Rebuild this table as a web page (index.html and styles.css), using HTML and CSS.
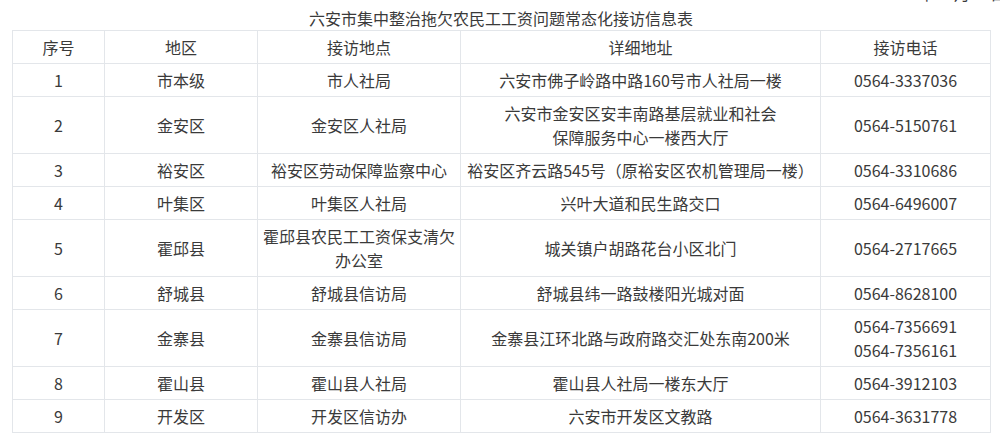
FILE: index.html
```html
<!DOCTYPE html>
<html lang="zh-CN">
<head>
<meta charset="utf-8">
<link rel="stylesheet" href="styles.css">
</head>
<body>
<div class="page">
  <div class="date">年　月　日</div>
  <div class="title">六安市集中整治拖欠农民工工资问题常态化接访信息表</div>
  <table class="info">
    <colgroup>
      <col class="c1"><col class="c2"><col class="c3"><col class="c4"><col class="c5">
    </colgroup>
    <tr><td>序号</td><td>地区</td><td>接访地点</td><td>详细地址</td><td>接访电话</td></tr>
    <tr><td>1</td><td>市本级</td><td>市人社局</td><td>六安市佛子岭路中路160号市人社局一楼</td><td>0564-3337036</td></tr>
    <tr><td>2</td><td>金安区</td><td>金安区人社局</td><td>六安市金安区安丰南路基层就业和社会<br>保障服务中心一楼西大厅</td><td>0564-5150761</td></tr>
    <tr><td>3</td><td>裕安区</td><td>裕安区劳动保障监察中心</td><td>裕安区齐云路545号（原裕安区农机管理局一楼）</td><td>0564-3310686</td></tr>
    <tr><td>4</td><td>叶集区</td><td>叶集区人社局</td><td>兴叶大道和民生路交口</td><td>0564-6496007</td></tr>
    <tr><td>5</td><td>霍邱县</td><td>霍邱县农民工工资保支清欠<br>办公室</td><td>城关镇户胡路花台小区北门</td><td>0564-2717665</td></tr>
    <tr><td>6</td><td>舒城县</td><td>舒城县信访局</td><td>舒城县纬一路鼓楼阳光城对面</td><td>0564-8628100</td></tr>
    <tr><td>7</td><td>金寨县</td><td>金寨县信访局</td><td>金寨县江环北路与政府路交汇处东南200米</td><td>0564-7356691<br>0564-7356161</td></tr>
    <tr><td>8</td><td>霍山县</td><td>霍山县人社局</td><td>霍山县人社局一楼东大厅</td><td>0564-3912103</td></tr>
    <tr><td>9</td><td>开发区</td><td>开发区信访办</td><td>六安市开发区文教路</td><td>0564-3631778</td></tr>
  </table>
</div>
</body>
</html>
```
FILE: styles.css
```css
html, body {
  margin: 0;
  padding: 0;
  background: #ffffff;
}
body {
  font-family: "Microsoft YaHei", "Noto Sans CJK SC", "Noto Sans", sans-serif;
  color: #3a3a3a;
  font-size: 16px;
  overflow: hidden;
}
.page {
  position: relative;
  width: 1000px;
  height: 444px;
  padding-left: 12px;
  box-sizing: border-box;
}
.date {
  position: absolute;
  top: -17px;
  right: -8px;
  font-size: 16px;
  line-height: 20px;
  color: #3a3a3a;
  letter-spacing: 2px;
}
.title {
  width: 978px;
  height: 30px;
  line-height: 36px;
  text-align: center;
  font-size: 16px;
}
.info {
  border-collapse: collapse;
  table-layout: fixed;
  width: 978px;
}
.c1 { width: 92px; }
.c2 { width: 153px; }
.c3 { width: 203px; }
.c4 { width: 360px; }
.c5 { width: 170px; }
.info td {
  border: 1px solid #e3e6ea;
  padding: 4px 3px;
  line-height: 24px;
  text-align: center;
  vertical-align: middle;
  white-space: nowrap;
}
```
